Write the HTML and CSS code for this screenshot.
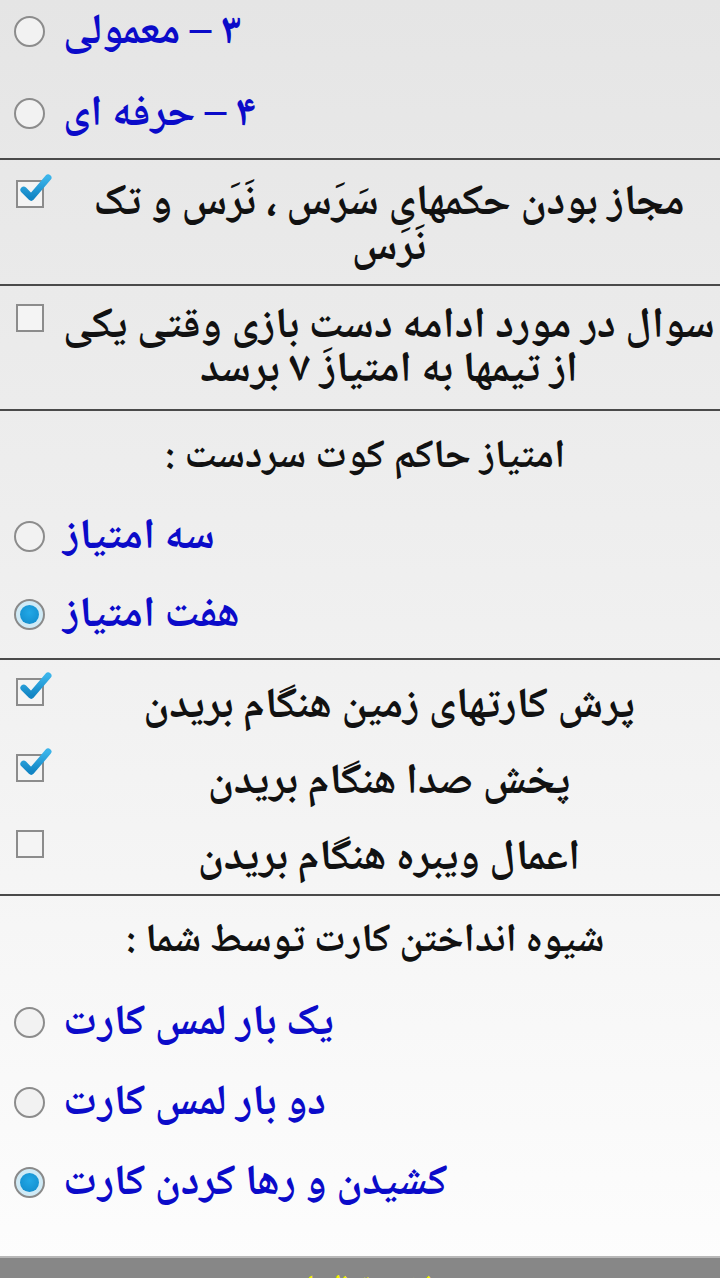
FILE: index.html
```html
<!DOCTYPE html>
<html lang="fa">
<head>
<meta charset="utf-8">
<title>تنظیمات</title>
<link rel="stylesheet" href="styles.css">
</head>
<body>
<div class="screen">
  <section class="group group-top">
    <div class="radio-row">
      <span class="radio"></span>
      <span class="label blue" dir="rtl">۳ – معمولی</span>
    </div>
    <div class="radio-row">
      <span class="radio"></span>
      <span class="label blue" dir="rtl">۴ – حرفه ای</span>
    </div>
  </section>

  <section class="group group-check">
    <div class="check-row tall">
      <span class="checkbox checked"><svg class="tick" viewBox="0 0 34 34"><defs><linearGradient id="tg1" x1="0" y1="0" x2="0" y2="1"><stop offset="0" stop-color="#3bb4ea"/><stop offset="1" stop-color="#1285c4"/></linearGradient></defs><path d="M5 18 L13 26 L31 5" stroke="url(#tg1)" /></svg></span>
      <span class="check-text" dir="rtl">مجاز بودن حکمهای سَرَس ، نَرَس و تک<br>نَرَس</span>
    </div>
  </section>

  <section class="group group-check second">
    <div class="check-row tall">
      <span class="checkbox"></span>
      <span class="check-text" dir="rtl">سوال در مورد ادامه دست بازی وقتی یکی<br>از تیمها به امتیازَ ۷ برسد</span>
    </div>
  </section>

  <section class="group group-heading">
    <div class="heading" dir="rtl">امتیاز حاکم کوت سردست :</div>
    <div class="radio-row">
      <span class="radio"></span>
      <span class="label blue" dir="rtl">سه امتیاز</span>
    </div>
    <div class="radio-row">
      <span class="radio checked"><span class="dot"></span></span>
      <span class="label blue" dir="rtl">هفت امتیاز</span>
    </div>
  </section>

  <section class="group group-checks">
    <div class="check-row">
      <span class="checkbox checked"><svg class="tick" viewBox="0 0 34 34"><defs><linearGradient id="tg2" x1="0" y1="0" x2="0" y2="1"><stop offset="0" stop-color="#3bb4ea"/><stop offset="1" stop-color="#1285c4"/></linearGradient></defs><path d="M5 18 L13 26 L31 5" stroke="url(#tg2)" /></svg></span>
      <span class="check-text" dir="rtl">پرش کارتهای زمین هنگام بریدن</span>
    </div>
    <div class="check-row">
      <span class="checkbox checked"><svg class="tick" viewBox="0 0 34 34"><defs><linearGradient id="tg3" x1="0" y1="0" x2="0" y2="1"><stop offset="0" stop-color="#3bb4ea"/><stop offset="1" stop-color="#1285c4"/></linearGradient></defs><path d="M5 18 L13 26 L31 5" stroke="url(#tg3)" /></svg></span>
      <span class="check-text" dir="rtl">پخش صدا هنگام بریدن</span>
    </div>
    <div class="check-row">
      <span class="checkbox"></span>
      <span class="check-text" dir="rtl">اعمال ویبره هنگام بریدن</span>
    </div>
  </section>

  <section class="group group-last">
    <div class="heading" dir="rtl">شیوه انداختن کارت توسط شما :</div>
    <div class="radio-row wide">
      <span class="radio"></span>
      <span class="label blue" dir="rtl">یک بار لمس کارت</span>
    </div>
    <div class="radio-row wide">
      <span class="radio"></span>
      <span class="label blue" dir="rtl">دو بار لمس کارت</span>
    </div>
    <div class="radio-row wide">
      <span class="radio checked"><span class="dot"></span></span>
      <span class="label blue" dir="rtl">کشیدن و رها کردن کارت</span>
    </div>
  </section>

  <footer class="bottom-bar">
    <span class="bar-text" dir="rtl">ذخیره تنظیمات</span>
  </footer>
</div>
</body>
</html>
```

FILE: styles.css
```css
html, body {
  margin: 0;
  padding: 0;
}

body {
  width: 720px;
  height: 1278px;
  overflow: hidden;
  font-family: "Noto Naskh Arabic", "Noto Sans Arabic", "DejaVu Sans", sans-serif;
  font-weight: bold;
  color: #111;
}

.screen {
  width: 720px;
  height: 1278px;
  display: flex;
  flex-direction: column;
  background: linear-gradient(to bottom, #e5e5e5 0%, #efefef 45%, #fdfdfd 100%);
}

.group {
  border-bottom: 2px solid #4a4a4a;
  flex: none;
  box-sizing: border-box;
}

.group-top {
  height: 160px;
  display: flex;
  flex-direction: column;
  gap: 20px;
}

.group-top .radio-row {
  height: 62px;
}

.radio-row {
  direction: ltr;
  display: flex;
  align-items: center;
  gap: 18px;
  height: 82px;
  padding-left: 14px;
}

.group-heading .radio-row {
  height: 78px;
}

.radio-row.wide {
  height: 80px;
}

.label {
  font-size: 43px;
  line-height: 48px;
  padding-top: 6px;
  white-space: nowrap;
}

.blue {
  color: #0b0bc9;
}

.radio {
  box-sizing: border-box;
  width: 31px;
  height: 31px;
  border-radius: 50%;
  border: 2px solid #8c8c8c;
  background: #f2f2f2;
  flex: none;
  display: flex;
  align-items: center;
  justify-content: center;
}

.radio.checked {
  background: #cfeaf6;
  border-color: #8a8a8a;
}

.dot {
  width: 19px;
  height: 19px;
  border-radius: 50%;
  background: radial-gradient(circle at 50% 40%, #22a8e6 0%, #1592d2 70%, #0e7bb5 100%);
}

/* checkbox rows */
.group-check {
  height: 126px;
  padding-top: 18px;
}

.group-check.second {
  height: 125px;
  padding-top: 16px;
}

.check-row {
  direction: ltr;
  display: flex;
  align-items: flex-start;
  height: 76px;
  box-sizing: border-box;
}

.check-row.tall {
  height: auto;
}

.checkbox {
  position: relative;
  box-sizing: border-box;
  width: 28px;
  height: 28px;
  margin-left: 16px;
  margin-top: 2px;
  border: 2px solid #8c8c8c;
  background: #f4f4f4;
  flex: none;
}

.tick {
  position: absolute;
  left: 1px;
  top: -9px;
  width: 32px;
  height: 32px;
  overflow: visible;
}

.tick path {
  fill: none;
  stroke-width: 7;
  stroke-linecap: round;
  stroke-linejoin: round;
}

.check-text {
  flex: 1;
  text-align: center;
  font-size: 43px;
  line-height: 45px;
  padding: 4px 0 0 14px;
  white-space: nowrap;
}

.group-check.second .check-text {
  line-height: 44px;
}

.group-checks {
  padding-top: 7px;
  height: 236px;
}

.group-checks .check-row {
  align-items: center;
}

.group-checks .checkbox {
  align-self: flex-start;
  margin-top: 11px;
}

.group-checks .check-text {
  padding-top: 4px;
}

.group-heading {
  height: 249px;
  padding-top: 25px;
}

.heading {
  text-align: center;
  font-size: 40px;
  line-height: 44px;
  padding-left: 10px;
  margin-bottom: 17px;
  white-space: nowrap;
}

.group-last {
  border-bottom: 0;
  padding-top: 24px;
  height: 360px;
}

.group-last .heading {
  margin-bottom: 18px;
}

.bottom-bar {
  flex: 1;
  background: #878787;
  border-top: 2px solid #b8b8b8;
  overflow: hidden;
  text-align: center;
}

.bar-text {
  display: block;
  color: #f3f000;
  font-size: 26px;
  line-height: 36px;
  padding-top: 11px;
}
```
